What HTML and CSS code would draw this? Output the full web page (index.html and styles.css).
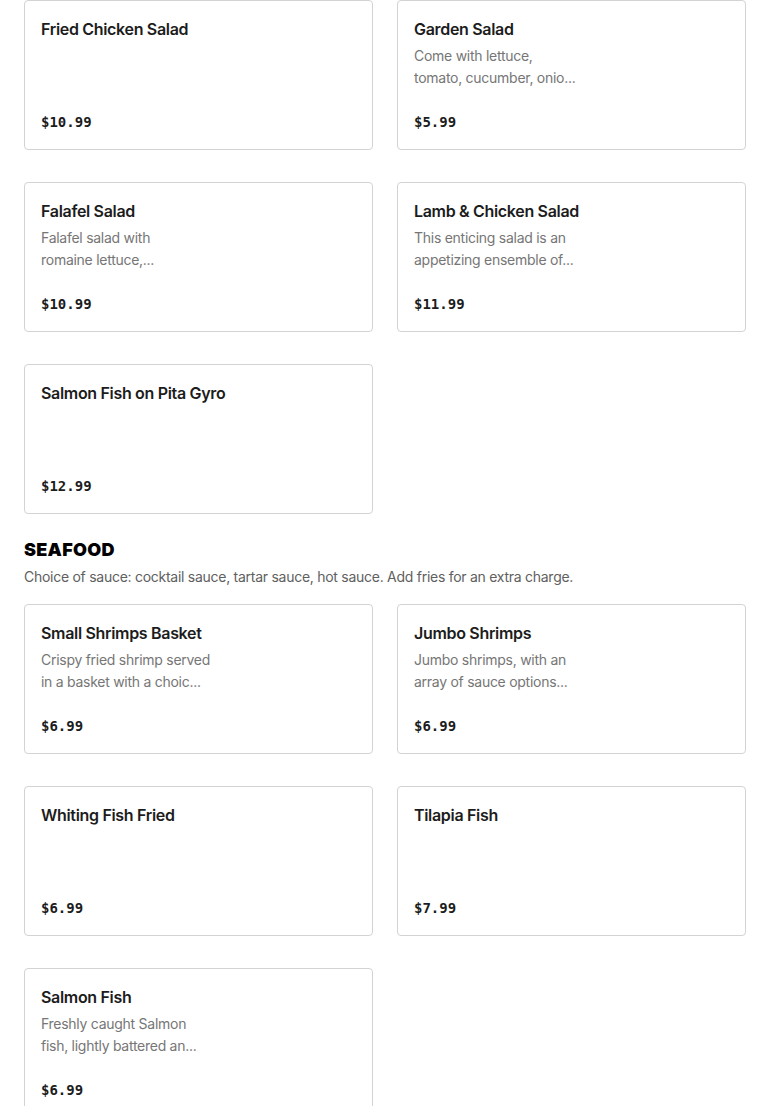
FILE: index.html
```html
<!DOCTYPE html>
<html lang="en">
<head>
<meta charset="utf-8">
<title>Menu</title>
<link rel="stylesheet" href="styles.css">
</head>
<body>
<main class="menu">
  <section class="section">
    <div class="grid">
      <article class="card">
        <h3 class="title">Fried Chicken Salad</h3>
        <p class="desc"></p>
        <div class="price">$10.99</div>
      </article>
      <article class="card">
        <h3 class="title">Garden Salad</h3>
        <p class="desc"><span class="line">Come with lettuce,</span><span class="line">tomato, cucumber, onio...</span></p>
        <div class="price">$5.99</div>
      </article>
      <article class="card">
        <h3 class="title">Falafel Salad</h3>
        <p class="desc"><span class="line">Falafel salad with</span><span class="line">romaine lettuce,...</span></p>
        <div class="price">$10.99</div>
      </article>
      <article class="card">
        <h3 class="title">Lamb &amp; Chicken Salad</h3>
        <p class="desc"><span class="line">This enticing salad is an</span><span class="line">appetizing ensemble of...</span></p>
        <div class="price">$11.99</div>
      </article>
      <article class="card">
        <h3 class="title">Salmon Fish on Pita Gyro</h3>
        <p class="desc"></p>
        <div class="price">$12.99</div>
      </article>
    </div>
  </section>
  <section class="section">
    <h2 class="section-title">SEAFOOD</h2>
    <p class="section-desc">Choice of sauce: cocktail sauce, tartar sauce, hot sauce. Add fries for an extra charge.</p>
    <div class="grid">
      <article class="card">
        <h3 class="title">Small Shrimps Basket</h3>
        <p class="desc"><span class="line">Crispy fried shrimp served</span><span class="line">in a basket with a choic...</span></p>
        <div class="price">$6.99</div>
      </article>
      <article class="card">
        <h3 class="title">Jumbo Shrimps</h3>
        <p class="desc"><span class="line">Jumbo shrimps, with an</span><span class="line">array of sauce options...</span></p>
        <div class="price">$6.99</div>
      </article>
      <article class="card">
        <h3 class="title">Whiting Fish Fried</h3>
        <p class="desc"></p>
        <div class="price">$6.99</div>
      </article>
      <article class="card">
        <h3 class="title">Tilapia Fish</h3>
        <p class="desc"></p>
        <div class="price">$7.99</div>
      </article>
      <article class="card">
        <h3 class="title">Salmon Fish</h3>
        <p class="desc"><span class="line">Freshly caught Salmon</span><span class="line">fish, lightly battered an...</span></p>
        <div class="price">$6.99</div>
      </article>
    </div>
  </section>
</main>
</body>
</html>
```

FILE: styles.css
```css
* { box-sizing: border-box; }
html, body { margin: 0; padding: 0; background: #fff; }
body {
  font-family: "Inter", "Liberation Sans", sans-serif;
  color: #191919;
}
.menu {
  padding: 0 24px;
}
.section + .section {
  margin-top: 24px;
}
.section-title {
  margin: 0;
  font-size: 18px;
  line-height: 24px;
  font-weight: 900;
  color: #000;
  letter-spacing: 0.3px;
}
.section-desc {
  margin: 4px 0 16px;
  font-size: 14px;
  line-height: 22px;
  color: #606060;
  letter-spacing: -0.27px;
}
.grid {
  display: grid;
  grid-template-columns: 1fr 1fr;
  column-gap: 24px;
  row-gap: 32px;
}
.card {
  height: 150px;
  border: 1px solid #d3d3d3;
  border-radius: 4px;
  padding: 16px;
  display: flex;
  flex-direction: column;
}
.title {
  margin: 0;
  font-size: 16px;
  line-height: 24px;
  font-weight: 600;
  color: #1c1c1c;
  letter-spacing: -0.32px;
}
.desc {
  margin: 4px 0 0;
  height: 44px;
  font-size: 14px;
  line-height: 22px;
  color: #767676;
  letter-spacing: -0.27px;
}
.line { display: block; white-space: nowrap; }
.price {
  margin-top: auto;
  font-family: "DejaVu Sans Mono", "Liberation Mono", monospace;
  font-size: 14px;
  line-height: 22px;
  font-weight: 700;
  color: #1c1c1c;
}
```
